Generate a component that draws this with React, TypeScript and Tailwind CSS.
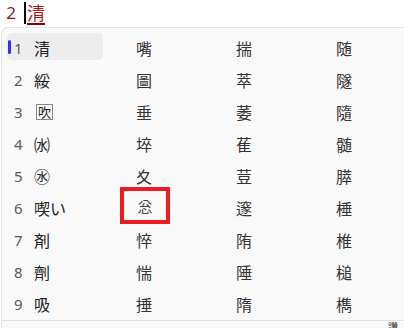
import React from "react";

const ROWS: string[][] = [
  ["清", "嘴", "揣", "随"],
  ["綏", "圖", "萃", "隧"],
  ["吹", "垂", "萎", "隨"],
  ["㈬", "埣", "萑", "髄"],
  ["㊌", "夊", "荳", "膵"],
  ["喫い", "忩", "邃", "棰"],
  ["剤", "悴", "陏", "椎"],
  ["劑", "惴", "陲", "槌"],
  ["吸", "捶", "隋", "檇"],
];

const jp = { fontFamily: '"Noto Sans CJK JP", "Noto Sans", sans-serif' };
const num = { fontFamily: '"Noto Sans", "Liberation Sans", sans-serif' };

export default function App() {
  return (
    <div className="w-[404px] h-[328px] bg-white overflow-hidden flex flex-col">
      {/* editor line */}
      <div className="h-[27px] flex items-start overflow-hidden shrink-0">
        <div className="w-[22px] flex flex-col items-center text-[#8b1a1a] text-[17px] leading-[20px] -mt-[17px]" style={num}>
          <span>1</span>
          <span>2</span>
          <span>3</span>
        </div>
        <div className="w-[2px] h-[22px] bg-black mt-[2px] ml-[2px]" />
        <span
          className="text-[#b0171a] text-[18px] leading-[22px] mt-[1px] ml-[1px] border-b-2 border-[#8b0000]"
          style={jp}
        >
          清
        </span>
      </div>

      {/* candidate window */}
      <div className="flex-1 ml-[1px] bg-[#f9f9f9] border-t border-l border-[#e4e4e4] rounded-tl-[7px] flex flex-col pt-[4px]">
        {ROWS.map((row, i) => (
          <div key={i} className="h-[32px] flex items-center pl-[5px]">
            <div
              className={`w-[96px] h-[27px] self-start mt-[1px] pt-[3px] flex items-center rounded-[5px] relative ${
                i === 0 ? "bg-[#ececec]" : ""
              }`}
            >
              {i === 0 && (
                <div className="absolute left-[1px] top-[7px] w-[3px] h-[14px] rounded-full bg-[#3333e6]" />
              )}
              <span className="w-[20px] ml-[7px] text-[15px] text-[#5a5a5a]" style={num}>
                {i + 1}
              </span>
              {i === 2 ? (
                <span
                  className="text-[13px] leading-[14px] px-[1px] border border-[#888] text-[#222] ml-[2px]"
                  style={jp}
                >
                  {row[0]}
                </span>
              ) : (
                <span className="text-[16px] text-[#222]" style={jp}>
                  {row[0]}
                </span>
              )}
            </div>
            {row.slice(1).map((c, j) => (
              <div key={j} className="w-[100px] pl-[33px] flex items-center">
                {i === 5 && j === 0 ? (
                  <span className="-ml-[16px] -mt-[6px] w-[50px] h-[37px] border-[4px] border-[#ec1c24] flex items-center justify-center text-[15px] text-[#444]" style={jp}>
                    <span className="mt-[3px]">{c}</span>
                  </span>
                ) : (
                  <span className="text-[16px] text-[#333]" style={jp}>
                    {c}
                  </span>
                )}
              </div>
            ))}
          </div>
        ))}
        <div className="mt-auto border-t border-[#e2e2e2] h-[11px] flex justify-end pr-[6px]">
          <span className="text-[10px] leading-[10px] text-[#333] mt-[1px]" style={jp}>
            讚
          </span>
        </div>
      </div>
    </div>
  );
}
